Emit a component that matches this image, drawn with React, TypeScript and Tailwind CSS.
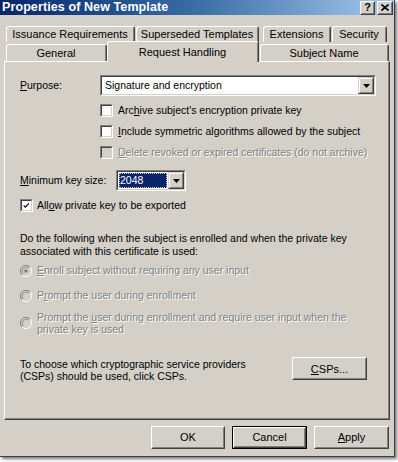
import React from "react";

const F = "font-['Liberation_Sans',Arial,sans-serif]";

function U({ children }: { children: React.ReactNode }) {
  return <span className="underline underline-offset-[1px]">{children}</span>;
}

function Sunken({ className, children }: { className?: string; children?: React.ReactNode }) {
  return (
    <div className={"border border-t-[#808080] border-l-[#808080] border-r-white border-b-white " + (className ?? "")}>
      <div className="w-full h-full border border-t-[#404040] border-l-[#404040] border-r-[#d4d0c8] border-b-[#d4d0c8] flex items-center">
        {children}
      </div>
    </div>
  );
}

function DropBtn() {
  return (
    <div className="w-[16px] h-full bg-[#d4d0c8] border border-t-[#d4d0c8] border-l-[#d4d0c8] border-r-[#404040] border-b-[#404040] shrink-0">
      <div className="w-full h-full border border-t-white border-l-white border-r-[#808080] border-b-[#808080] flex items-center justify-center">
        <svg width="7" height="4" viewBox="0 0 7 4"><path d="M0 0h7L3.5 4z" fill="#000" /></svg>
      </div>
    </div>
  );
}

function Check({ checked, disabled }: { checked?: boolean; disabled?: boolean }) {
  return (
    <Sunken className={"w-[13px] h-[13px] shrink-0 " + (disabled ? "bg-[#d4d0c8]" : "bg-white")}>
      {checked && (
        <svg width="11" height="11" viewBox="0 0 11 11" className="block">
          <path d="M2 4.5 L4 6.5 L8.5 2 V4 L4 8.5 L2 6.5z" fill="#000" />
        </svg>
      )}
    </Sunken>
  );
}

function Radio({ selected }: { selected?: boolean }) {
  return (
    <svg width="12" height="12" viewBox="0 0 12 12" className="shrink-0">
      <circle cx="6" cy="6" r="5.5" fill="#d4d0c8" />
      <path d="M10 2 A5.5 5.5 0 0 0 2 10" stroke="#808080" fill="none" strokeWidth="1" />
      <path d="M2 10 A5.5 5.5 0 0 0 10 2" stroke="#ffffff" fill="none" strokeWidth="1" />
      <path d="M9 3 A4.3 4.3 0 0 0 3 9" stroke="#404040" fill="none" strokeWidth="1" opacity="0.45" />
      {selected && <circle cx="6" cy="6" r="1.8" fill="#808080" />}
    </svg>
  );
}

function Btn({ children, def, className }: { children: React.ReactNode; def?: boolean; className?: string }) {
  return (
    <div className={(def ? "border border-black " : "") + "bg-[#d4d0c8] " + (className ?? "")}>
      <div className="w-full h-full border border-t-white border-l-white border-r-[#404040] border-b-[#404040]">
        <div className="w-full h-full border border-t-[#d4d0c8] border-l-[#d4d0c8] border-r-[#808080] border-b-[#808080] flex items-center justify-center text-[11px] text-black">
          {children}
        </div>
      </div>
    </div>
  );
}

function Tab({ label, w, h, selected }: { label: string; w: number; h: string; selected?: boolean }) {
  return (
    <div
      style={{ width: w }}
      className={
        "shrink-0 bg-[#d4d0c8] border-t border-l border-white border-r border-r-[#404040] rounded-t-[3px] flex items-center justify-center text-[11px] text-black " +
        h +
        (selected ? " relative z-10" : "")
      }
    >
      <div className="w-full h-full border-r border-[#808080] flex items-center justify-center">{label}</div>
    </div>
  );
}

const dis = "text-[#808080] [text-shadow:1px_1px_0_#ffffff]";

export default function App() {
  return (
    <div className={"w-[398px] h-[462px] bg-white " + F}>
      <div className="w-[395px] h-[457px] bg-[#d4d0c8] shadow-[2px_2px_3px_rgba(0,0,0,0.55)] flex flex-col border-r border-b border-[#404040]">
        {/* Title bar */}
        <div className="h-[15px] bg-gradient-to-r from-[#0a246a] via-[#3a6ea5] to-[#a6caf0] flex items-center justify-between pl-[2px] pr-[1px]">
          <span className="text-white font-bold text-[12.5px] leading-none tracking-[0.1px]">Properties of New Template</span>
          <div className="flex gap-[2px] h-[14px] items-start">
            <Btn className="w-[15px] h-[14px]">
              <span className="font-bold text-[11px] leading-none">?</span>
            </Btn>
            <Btn className="w-[16px] h-[14px]">
              <svg width="8" height="7" viewBox="0 0 8 7"><path d="M0.5 0.5L7.5 6.5M7.5 0.5L0.5 6.5" stroke="#000" strokeWidth="1.6" /></svg>
            </Btn>
          </div>
        </div>

        {/* Tabs */}
        <div className="pl-[6px] mt-[11px] flex h-[16px] items-end">
          <Tab label="Issuance Requirements" w={129} h="h-[16px]" />
          <div className="w-[1px]" />
          <Tab label="Superseded Templates" w={123} h="h-[16px]" />
          <div className="w-[4px]" />
          <Tab label="Extensions" w={68} h="h-[16px]" />
          <div className="w-[1px]" />
          <Tab label="Security" w={55} h="h-[16px]" />
        </div>
        <div className="pl-[6px] flex h-[20px] items-end -mb-[1px] mt-[0px]">
          <Tab label="General" w={101} h="h-[18px]" />
          <Tab label="Request Handling" w={152} h="h-[21px]" selected />
          <div className="w-[1px]" />
          <Tab label="Subject Name" w={129} h="h-[18px]" />
        </div>

        {/* Panel */}
        <div className="ml-[4px] w-[386px] h-[359px] border border-t-white border-l-white border-r-[#404040] border-b-[#404040] text-[10.5px] text-black leading-[13px]">
          <div className="w-full h-full border-r border-b border-[#808080] pl-[15px] flex flex-col">
            <div className="mt-[13px] flex items-center h-[21px]">
              <span className="w-[80px]"><U>P</U>urpose:</span>
              <Sunken className="w-[276px] h-[21px] bg-white">
                <span className="flex-1 pl-[3px]">Signature and encryption</span>
                <DropBtn />
              </Sunken>
            </div>
            <div className="mt-[8px] ml-[80px] flex items-center gap-[5px] h-[13px]">
              <Check />
              <span>Arc<U>h</U>ive subject's encryption private key</span>
            </div>
            <div className="mt-[8px] ml-[80px] flex items-center gap-[5px] h-[13px]">
              <Check />
              <span><U>I</U>nclude symmetric algorithms allowed by the subject</span>
            </div>
            <div className="mt-[8px] ml-[80px] flex items-center gap-[5px] h-[13px]">
              <Check disabled />
              <span className={dis}><U>D</U>elete revoked or expired certificates (do not archive)</span>
            </div>
            <div className="mt-[11px] flex items-center h-[21px]">
              <span className="w-[96px]"><U>M</U>inimum key size:</span>
              <Sunken className="w-[70px] h-[21px] bg-white">
                <div className="flex-1 h-full p-[1px]">
                  <div className="h-full bg-[#0a246a] text-white pl-[1px] flex items-center outline-1 outline-dotted outline-[#d4d0c8] -outline-offset-1">2048</div>
                </div>
                <DropBtn />
              </Sunken>
            </div>
            <div className="mt-[8px] flex items-center gap-[4px] h-[13px]">
              <Check checked />
              <span>All<U>o</U>w private key to be exported</span>
            </div>
            <div className="mt-[20px]">
              Do the following when the subject is enrolled and when the private key
              <br />
              associated with this certificate is used:
            </div>
            <div className="mt-[6px] flex items-center gap-[5px] h-[13px]">
              <Radio selected />
              <span className={dis}><U>E</U>nroll subject without requiring any user input</span>
            </div>
            <div className="mt-[12px] flex items-center gap-[5px] h-[13px]">
              <Radio />
              <span className={dis}>P<U>r</U>ompt the user during enrollment</span>
            </div>
            <div className="mt-[9px] flex items-center gap-[5px] leading-[12px]">
              <Radio />
              <span className={dis}>
                Prompt the <U>u</U>ser during enrollment and require user input when the
                <br />
                private key is used
              </span>
            </div>
            <div className="mt-[23px] flex items-center leading-[12px]">
              <div className="w-[272px]">
                To choose which cryptographic service providers
                <br />
                (CSPs) should be used, click CSPs.
              </div>
              <Btn className="w-[75px] h-[23px] -mt-[3px]">
                <span><U>C</U>SPs...</span>
              </Btn>
            </div>
          </div>
        </div>

        {/* Bottom buttons */}
        <div className="mt-[6px] flex justify-end pr-[5px] gap-[7px]">
          <Btn className="w-[74px] h-[23px]">OK</Btn>
          <Btn def className="w-[75px] h-[23px]">Cancel</Btn>
          <Btn className="w-[75px] h-[23px]"><span><U>A</U>pply</span></Btn>
        </div>
      </div>
    </div>
  );
}
